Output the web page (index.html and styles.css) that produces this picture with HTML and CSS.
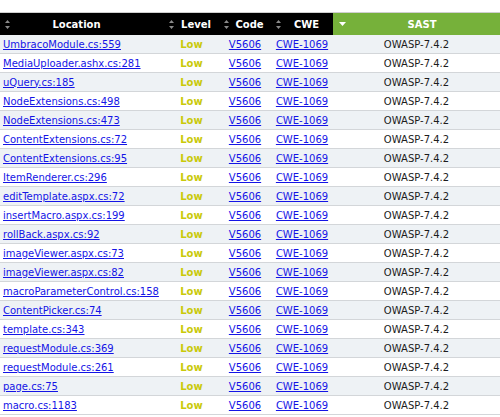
FILE: index.html
```html
<!DOCTYPE html>
<html>
<head>
<meta charset="utf-8">
<link rel="stylesheet" href="styles.css">
</head>
<body>
<div class="wrap">
<table class="grid">
<colgroup>
<col class="c-loc"><col class="c-lvl"><col class="c-code"><col class="c-cwe"><col class="c-sast">
</colgroup>
<thead>
<tr>
<th class="h-loc"><div class="hd"><svg class="sort" width="5" height="9" viewBox="0 0 5 9"><path d="M2.5 0L5 3H0Z M0 6H5L2.5 9Z" fill="#8a8a8a"/></svg><span class="lbl">Location</span></div></th>
<th><div class="hd"><svg class="sort" width="5" height="9" viewBox="0 0 5 9"><path d="M2.5 0L5 3H0Z M0 6H5L2.5 9Z" fill="#8a8a8a"/></svg><span class="lbl">Level</span></div></th>
<th><div class="hd"><svg class="sort" width="5" height="9" viewBox="0 0 5 9"><path d="M2.5 0L5 3H0Z M0 6H5L2.5 9Z" fill="#8a8a8a"/></svg><span class="lbl">Code</span></div></th>
<th><div class="hd"><svg class="sort" width="5" height="9" viewBox="0 0 5 9"><path d="M2.5 0L5 3H0Z M0 6H5L2.5 9Z" fill="#8a8a8a"/></svg><span class="lbl">CWE</span></div></th>
<th class="h-sast"><div class="hd"><svg class="sort down" width="7" height="4" viewBox="0 0 7 4"><path d="M0 0H7L3.5 4Z" fill="#ffffff"/></svg><span class="lbl">SAST</span></div></th>
</tr>
</thead>
<tbody>
<tr><td class="loc"><a href="#">UmbracoModule.cs:559</a></td><td class="lvl">Low</td><td class="ctr"><a href="#">V5606</a></td><td class="ctr"><a href="#">CWE-1069</a></td><td class="ctr txt">OWASP-7.4.2</td></tr>
<tr><td class="loc"><a href="#">MediaUploader.ashx.cs:281</a></td><td class="lvl">Low</td><td class="ctr"><a href="#">V5606</a></td><td class="ctr"><a href="#">CWE-1069</a></td><td class="ctr txt">OWASP-7.4.2</td></tr>
<tr><td class="loc"><a href="#">uQuery.cs:185</a></td><td class="lvl">Low</td><td class="ctr"><a href="#">V5606</a></td><td class="ctr"><a href="#">CWE-1069</a></td><td class="ctr txt">OWASP-7.4.2</td></tr>
<tr><td class="loc"><a href="#">NodeExtensions.cs:498</a></td><td class="lvl">Low</td><td class="ctr"><a href="#">V5606</a></td><td class="ctr"><a href="#">CWE-1069</a></td><td class="ctr txt">OWASP-7.4.2</td></tr>
<tr><td class="loc"><a href="#">NodeExtensions.cs:473</a></td><td class="lvl">Low</td><td class="ctr"><a href="#">V5606</a></td><td class="ctr"><a href="#">CWE-1069</a></td><td class="ctr txt">OWASP-7.4.2</td></tr>
<tr><td class="loc"><a href="#">ContentExtensions.cs:72</a></td><td class="lvl">Low</td><td class="ctr"><a href="#">V5606</a></td><td class="ctr"><a href="#">CWE-1069</a></td><td class="ctr txt">OWASP-7.4.2</td></tr>
<tr><td class="loc"><a href="#">ContentExtensions.cs:95</a></td><td class="lvl">Low</td><td class="ctr"><a href="#">V5606</a></td><td class="ctr"><a href="#">CWE-1069</a></td><td class="ctr txt">OWASP-7.4.2</td></tr>
<tr><td class="loc"><a href="#">ItemRenderer.cs:296</a></td><td class="lvl">Low</td><td class="ctr"><a href="#">V5606</a></td><td class="ctr"><a href="#">CWE-1069</a></td><td class="ctr txt">OWASP-7.4.2</td></tr>
<tr><td class="loc"><a href="#">editTemplate.aspx.cs:72</a></td><td class="lvl">Low</td><td class="ctr"><a href="#">V5606</a></td><td class="ctr"><a href="#">CWE-1069</a></td><td class="ctr txt">OWASP-7.4.2</td></tr>
<tr><td class="loc"><a href="#">insertMacro.aspx.cs:199</a></td><td class="lvl">Low</td><td class="ctr"><a href="#">V5606</a></td><td class="ctr"><a href="#">CWE-1069</a></td><td class="ctr txt">OWASP-7.4.2</td></tr>
<tr><td class="loc"><a href="#">rollBack.aspx.cs:92</a></td><td class="lvl">Low</td><td class="ctr"><a href="#">V5606</a></td><td class="ctr"><a href="#">CWE-1069</a></td><td class="ctr txt">OWASP-7.4.2</td></tr>
<tr><td class="loc"><a href="#">imageViewer.aspx.cs:73</a></td><td class="lvl">Low</td><td class="ctr"><a href="#">V5606</a></td><td class="ctr"><a href="#">CWE-1069</a></td><td class="ctr txt">OWASP-7.4.2</td></tr>
<tr><td class="loc"><a href="#">imageViewer.aspx.cs:82</a></td><td class="lvl">Low</td><td class="ctr"><a href="#">V5606</a></td><td class="ctr"><a href="#">CWE-1069</a></td><td class="ctr txt">OWASP-7.4.2</td></tr>
<tr><td class="loc"><a href="#">macroParameterControl.cs:158</a></td><td class="lvl">Low</td><td class="ctr"><a href="#">V5606</a></td><td class="ctr"><a href="#">CWE-1069</a></td><td class="ctr txt">OWASP-7.4.2</td></tr>
<tr><td class="loc"><a href="#">ContentPicker.cs:74</a></td><td class="lvl">Low</td><td class="ctr"><a href="#">V5606</a></td><td class="ctr"><a href="#">CWE-1069</a></td><td class="ctr txt">OWASP-7.4.2</td></tr>
<tr><td class="loc"><a href="#">template.cs:343</a></td><td class="lvl">Low</td><td class="ctr"><a href="#">V5606</a></td><td class="ctr"><a href="#">CWE-1069</a></td><td class="ctr txt">OWASP-7.4.2</td></tr>
<tr><td class="loc"><a href="#">requestModule.cs:369</a></td><td class="lvl">Low</td><td class="ctr"><a href="#">V5606</a></td><td class="ctr"><a href="#">CWE-1069</a></td><td class="ctr txt">OWASP-7.4.2</td></tr>
<tr><td class="loc"><a href="#">requestModule.cs:261</a></td><td class="lvl">Low</td><td class="ctr"><a href="#">V5606</a></td><td class="ctr"><a href="#">CWE-1069</a></td><td class="ctr txt">OWASP-7.4.2</td></tr>
<tr><td class="loc"><a href="#">page.cs:75</a></td><td class="lvl">Low</td><td class="ctr"><a href="#">V5606</a></td><td class="ctr"><a href="#">CWE-1069</a></td><td class="ctr txt">OWASP-7.4.2</td></tr>
<tr><td class="loc"><a href="#">macro.cs:1183</a></td><td class="lvl">Low</td><td class="ctr"><a href="#">V5606</a></td><td class="ctr"><a href="#">CWE-1069</a></td><td class="ctr txt">OWASP-7.4.2</td></tr>
</tbody>
</table>
</div>
</body>
</html>
```

FILE: styles.css
```css
html, body {
  margin: 0;
  padding: 0;
  background: #ffffff;
}
body {
  font-family: "DejaVu Sans", Verdana, sans-serif;
  font-size: 10px;
  color: #1c1c1c;
}
.wrap {
  padding-top: 12px;
}
.grid {
  width: 500px;
  border-collapse: collapse;
  table-layout: fixed;
  border-top: 1px solid #cfcfcf;
}
.c-loc { width: 164px; }
.c-lvl { width: 55px; }
.c-code { width: 52px; }
.c-cwe { width: 62px; }
.c-sast { width: 167px; }

.grid th {
  height: 22px;
  padding: 0 1px 0 0;
  background: #000000;
  color: #ffffff;
  font-weight: bold;
  font-size: 10px;
}
.grid th.h-sast {
  background: #76b13a;
  padding-right: 0;
}
.grid th.h-loc {
  padding-right: 21px;
}
.hd {
  display: flex;
  align-items: center;
}
.sort {
  flex: none;
  margin-left: 5px;
}
.sort.down {
  margin-left: 6px;
}
.lbl {
  flex: 1;
  text-align: center;
}
.h-sast .lbl {
  margin-left: -2px;
}
.grid td {
  height: 18px;
  padding: 0;
  border-bottom: 1px solid #d3d6d9;
  white-space: nowrap;
  overflow: hidden;
}
.grid tbody tr:nth-child(odd) td {
  background: #eef2f5;
}
.grid tbody tr:nth-child(even) td {
  background: #ffffff;
}
.loc {
  padding-left: 3px !important;
  text-align: left;
}
.lvl {
  text-align: center;
  font-weight: bold;
  color: #c9c90a;
}
.ctr {
  text-align: center;
}
.txt {
  color: #1c1c1c;
}
a {
  color: #1414e6;
  text-decoration: underline;
}
```
